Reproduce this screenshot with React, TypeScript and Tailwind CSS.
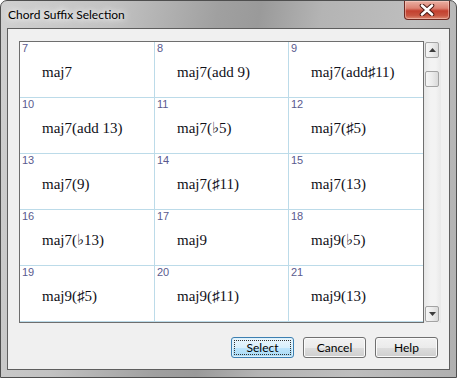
import React from "react";

const cells: { n: number; t: string }[] = [
  { n: 7, t: "maj7" },
  { n: 8, t: "maj7(add 9)" },
  { n: 9, t: "maj7(add\u266F11)" },
  { n: 10, t: "maj7(add 13)" },
  { n: 11, t: "maj7(\u266D5)" },
  { n: 12, t: "maj7(\u266F5)" },
  { n: 13, t: "maj7(9)" },
  { n: 14, t: "maj7(\u266F11)" },
  { n: 15, t: "maj7(13)" },
  { n: 16, t: "maj7(\u266D13)" },
  { n: 17, t: "maj9" },
  { n: 18, t: "maj9(\u266D5)" },
  { n: 19, t: "maj9(\u266F5)" },
  { n: 20, t: "maj9(\u266F11)" },
  { n: 21, t: "maj9(13)" },
];

function CloseButton() {
  return (
    <div className="w-[46px] h-[19px] mr-[6px] rounded-b-[4px] border border-t-0 border-[#6e2a22] bg-[linear-gradient(180deg,#eab0a3_0%,#dc8272_40%,#c3402f_55%,#c85440_80%,#dc8a74_100%)] shadow-[inset_0_0_0_1px_rgba(255,220,210,0.45)] flex items-center justify-center">
      <svg width="16" height="12" viewBox="0 0 16 12">
        <path d="M3 1.5 L13 10.5 M13 1.5 L3 10.5" stroke="#4a1a14" strokeWidth="4.6" strokeLinecap="round" />
        <path d="M3 1.5 L13 10.5 M13 1.5 L3 10.5" stroke="#ffffff" strokeWidth="2.6" strokeLinecap="round" />
      </svg>
    </div>
  );
}

function ScrollArrow({ up }: { up: boolean }) {
  return (
    <div className="w-[14px] h-[16px] mx-[1px] rounded-[2px] border border-[#a3a3a3] bg-[linear-gradient(90deg,#f6f6f6_0%,#ececec_50%,#dadada_100%)] flex items-center justify-center">
      <svg width="7" height="4" viewBox="0 0 7 4">
        {up ? <path d="M0 4 L3.5 0 L7 4 Z" fill="#3c3c3c" /> : <path d="M0 0 L3.5 4 L7 0 Z" fill="#3c3c3c" />}
      </svg>
    </div>
  );
}

function WinButton({ label, primary }: { label: string; primary?: boolean }) {
  const cls = primary
    ? "w-[63px] h-[21px] rounded-[3px] border border-[#3c7fb1] bg-[linear-gradient(180deg,#eaf6fd_0%,#d9f0fc_50%,#bee6fd_51%,#a7d9f5_100%)] shadow-[inset_0_0_0_1px_#dff2fc] outline-1 outline-dotted outline-offset-[-4px] outline-[#333] flex items-center justify-center text-[12px] text-black font-['Lato',sans-serif]"
    : "w-[63px] h-[21px] rounded-[3px] border border-[#707070] bg-[linear-gradient(180deg,#f2f2f2_0%,#ebebeb_50%,#dddddd_51%,#cfcfcf_100%)] shadow-[inset_0_0_0_1px_#fbfbfb] flex items-center justify-center text-[12px] text-black font-['Lato',sans-serif]";
  return <div className={cls}>{label}</div>;
}

export default function App() {
  return (
    <div className="w-[457px] h-[378px] flex flex-col border border-[#4e4e4e] rounded-t-[7px] overflow-hidden bg-[linear-gradient(100deg,#d0d0d0_0%,#c2c2c2_22%,#a0a0a0_42%,#9a9a9a_50%,#b4b4b4_62%,#bebebe_80%,#b0b0b0_100%)]">
      <div className="h-[27px] flex items-start justify-between shrink-0">
        <div className="pt-[6px] pl-[7px] text-[12px] leading-[15px] text-black font-['Lato',sans-serif] [text-shadow:0_0_6px_#fff,0_0_10px_#fff]">
          Chord Suffix Selection
        </div>
        <CloseButton />
      </div>
      <div className="flex-1 px-[6px] pb-[7px] flex">
        <div className="flex-1 border border-[#5e5e5e] bg-[#f0f0f0] flex flex-col pl-[11px] pt-[12px]">
          <div className="flex h-[282px]">
            <div className="w-[405px] h-[282px] border border-[#6e6e6e] bg-white overflow-hidden">
              <div className="grid grid-cols-[135px_134px_134px]">
                {cells.map((c, i) => (
                  <div
                    key={c.n}
                    className={
                      i % 3 === 2
                        ? "h-[56px] border-b border-[#bcdbe9] flex flex-col"
                        : "h-[56px] border-b border-r border-[#bcdbe9] flex flex-col"
                    }
                  >
                    <div className="pl-[2px] text-[11px] leading-[12px] text-[#5a5a8e] font-['Liberation_Sans',Arial,sans-serif]">
                      {c.n}
                    </div>
                    <div className="mt-[10px] pl-[22px] text-[15px] leading-[17px] text-[#101018] whitespace-nowrap font-['Liberation_Serif','Times_New_Roman','DejaVu_Serif',serif]">
                      {c.t}
                    </div>
                  </div>
                ))}
              </div>
            </div>
            <div className="w-[17px] h-[282px] bg-[linear-gradient(90deg,#e6e6e6_0%,#f3f3f3_40%,#f3f3f3_70%,#e8e8e8_100%)] flex flex-col pt-[1px] pb-[1px]">
              <ScrollArrow up />
              <div className="mt-[13px] w-[14px] h-[16px] mx-[1px] rounded-[2px] border border-[#a3a3a3] bg-[linear-gradient(90deg,#f6f6f6_0%,#ececec_50%,#dadada_100%)]" />
              <div className="flex-1" />
              <ScrollArrow up={false} />
            </div>
          </div>
          <div className="mt-[14px] flex justify-end gap-[9px] pr-[11px]">
            <WinButton label="Select" primary />
            <WinButton label="Cancel" />
            <WinButton label="Help" />
          </div>
        </div>
      </div>
    </div>
  );
}
